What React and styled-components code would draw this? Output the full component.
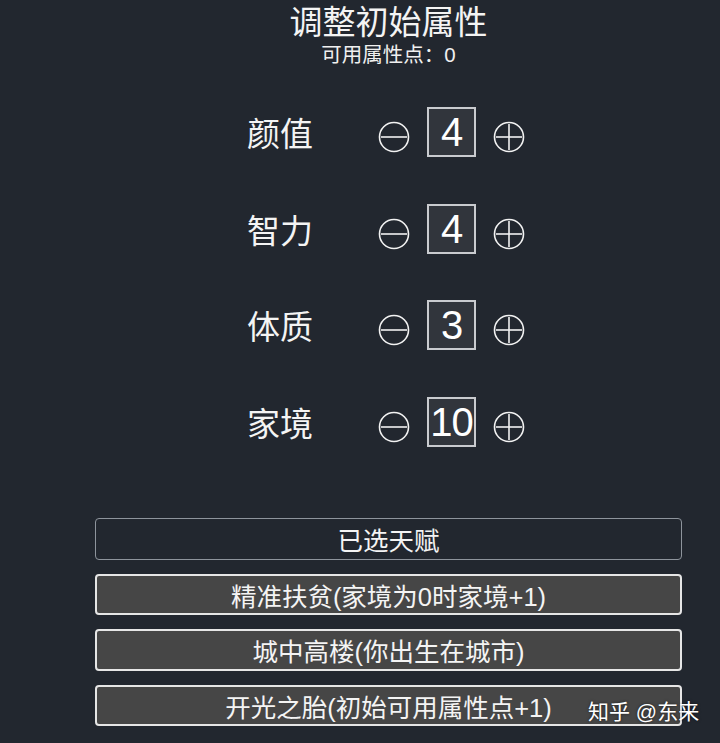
import styled, { createGlobalStyle } from "styled-components"

const GlobalStyle = createGlobalStyle`
    html, body {
        margin: 0;
        padding: 0;
        background: #22272f;
    }
    body {
        font-family: "Liberation Sans", "Noto Sans CJK SC", sans-serif;
        color: #fff;
    }
`

const stats = [
    { name: "颜值", value: 4 },
    { name: "智力", value: 4 },
    { name: "体质", value: 3 },
    { name: "家境", value: 10 },
]

const talents = [
    "精准扶贫(家境为0时家境+1)",
    "城中高楼(你出生在城市)",
    "开光之胎(初始可用属性点+1)",
]

const MinusIcon = () => (
    <svg width="32" height="32" viewBox="0 0 32 32" fill="none" stroke="#f2f2f2" strokeWidth="1.6">
        <circle cx="16" cy="16" r="14.5" />
        <line x1="3" y1="16" x2="29" y2="16" />
    </svg>
)

const PlusIcon = () => (
    <svg width="32" height="32" viewBox="0 0 32 32" fill="none" stroke="#f2f2f2" strokeWidth="1.6">
        <circle cx="16" cy="16" r="14.5" />
        <line x1="3" y1="16" x2="29" y2="16" />
        <line x1="16" y1="3" x2="16" y2="29" />
    </svg>
)

const App = () => {
    return (
        <Page>
            <GlobalStyle />
            <Panel>
                <Title>调整初始属性</Title>
                <Points>可用属性点：0</Points>
                <StatList>
                    {stats.map((s) => (
                        <StatRow key={s.name}>
                            <StatName>{s.name}</StatName>
                            <Step $left>
                                <MinusIcon />
                            </Step>
                            <ValueBox>{s.value}</ValueBox>
                            <Step>
                                <PlusIcon />
                            </Step>
                        </StatRow>
                    ))}
                </StatList>
                <TalentList>
                    <TalentHeader>已选天赋</TalentHeader>
                    {talents.map((t) => (
                        <Talent key={t}>{t}</Talent>
                    ))}
                </TalentList>
            </Panel>
            <Watermark>知乎 @东来</Watermark>
        </Page>
    )
}

const Page = styled.div`
    position: relative;
    width: 720px;
    height: 743px;
    overflow: hidden;
    background: #22272f;
`
const Panel = styled.div`
    width: 587px;
    margin-left: 95px;
    display: flex;
    flex-direction: column;
    align-items: center;
`
const Title = styled.div`
    font-size: 33px;
    line-height: 40px;
    margin-top: 3px;
    color: #f4f4f4;
`
const Points = styled.div`
    font-size: 20.5px;
    line-height: 24px;
    color: #f0f0f0;
`
const StatList = styled.div`
    margin-top: 17px;
    display: flex;
    flex-direction: column;
`
const StatRow = styled.div`
    height: 96.5px;
    display: flex;
    align-items: center;
    justify-content: center;
    padding-right: 5px;
`
const StatName = styled.div`
    width: 66px;
    font-size: 33px;
    line-height: 40px;
    margin: 6px 65px 0 0;
    color: #f4f4f4;
`
const Step = styled.div`
    width: 32px;
    height: 32px;
    display: flex;
    margin: ${(p) => (p.$left ? "10px 17px 0 0" : "10px 0 0 17px")};
    cursor: pointer;
`
const ValueBox = styled.div`
    box-sizing: border-box;
    width: 49px;
    height: 50px;
    border: 2px solid #c9cbcf;
    background: #31353c;
    display: flex;
    align-items: center;
    justify-content: center;
    font-size: 40px;
    line-height: 1;
    color: #fff;
    letter-spacing: -1px;
`
const TalentList = styled.div`
    width: 100%;
    margin-top: 48px;
    display: flex;
    flex-direction: column;
    gap: 14px;
`
const TalentHeader = styled.div`
    box-sizing: border-box;
    height: 41.5px;
    border: 1.5px solid #8e949c;
    border-radius: 4px;
    display: flex;
    align-items: center;
    justify-content: center;
    font-size: 25.5px;
    color: #f4f4f4;
`
const Talent = styled(TalentHeader)`
    border: 2px solid #e6e6e6;
    background: #464646;
`
const Watermark = styled.div`
    position: absolute;
    left: 588px;
    top: 698px;
    font-size: 21px;
    line-height: 28px;
    color: #fff;
    text-shadow: 0 0 3px rgba(0, 0, 0, 0.6);
`

export default App
